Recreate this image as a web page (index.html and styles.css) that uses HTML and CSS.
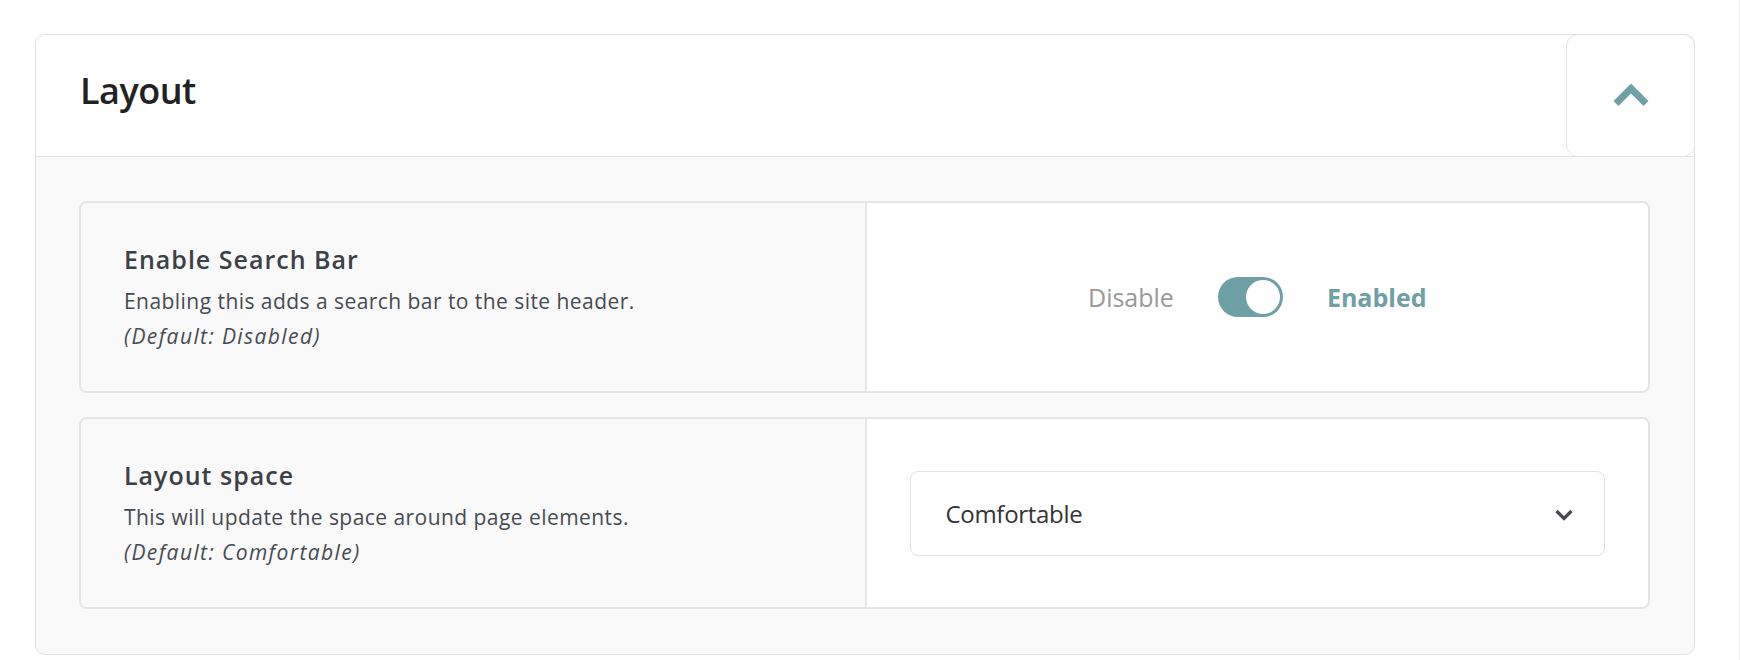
FILE: index.html
```html
<!DOCTYPE html>
<html lang="en">
<head>
<meta charset="utf-8">
<title>Layout settings</title>
<link rel="stylesheet" href="styles.css">
</head>
<body>
<div class="page">
  <section class="panel">
    <header class="panel-header">
      <h1 class="panel-title">Layout</h1>
      <button class="collapse-btn" type="button" aria-label="Collapse">
        <svg class="chev-up" width="36" height="24" viewBox="0 0 36 24" aria-hidden="true">
          <polyline points="3,20.5 18,5.5 33,20.5" fill="none" stroke="#6fa0a6" stroke-width="7" stroke-linejoin="miter" stroke-linecap="butt"/>
        </svg>
      </button>
    </header>
    <div class="panel-body">
      <div class="setting">
        <div class="setting-info">
          <h2 class="setting-title">Enable Search Bar</h2>
          <p class="setting-desc">Enabling this adds a search bar to the site header.</p>
          <p class="setting-default">(Default: Disabled)</p>
        </div>
        <div class="setting-control">
          <div class="toggle-group">
            <span class="toggle-off">Disable</span>
            <span class="toggle"><span class="knob"></span></span>
            <span class="toggle-on">Enabled</span>
          </div>
        </div>
      </div>
      <div class="setting">
        <div class="setting-info">
          <h2 class="setting-title">Layout space</h2>
          <p class="setting-desc">This will update the space around page elements.</p>
          <p class="setting-default">(Default: Comfortable)</p>
        </div>
        <div class="setting-control select-wrap">
          <div class="select">
            <span class="select-value">Comfortable</span>
            <svg class="chev-down" width="20" height="12" viewBox="0 0 20 12" aria-hidden="true">
              <polyline points="2.5,2 10,9.5 17.5,2" fill="none" stroke="#474a4e" stroke-width="3.2"/>
            </svg>
          </div>
        </div>
      </div>
    </div>
  </section>
</div>
</body>
</html>
```

FILE: styles.css
```css
* { box-sizing: border-box; }

html, body {
  margin: 0;
  padding: 0;
  background: #ffffff;
}

body {
  font-family: "Open Sans", "Noto Sans", "Liberation Sans", sans-serif;
  color: #222;
}

.page {
  width: 1740px;
  height: 660px;
  padding: 34px 44px 0 35px;
  border-right: 1px solid #ececec;
  overflow: hidden;
}

.panel {
  width: 1660px;
  border: 1px solid #e2e2e2;
  border-radius: 10px;
  background: #f9f9f9;
  overflow: hidden;
}

.panel-header {
  display: flex;
  align-items: stretch;
  height: 122px;
  background: #ffffff;
  border-bottom: 1px solid #e2e2e2;
}

.panel-title {
  flex: 1;
  margin: 0;
  padding: 34px 0 0 44px;
  font-size: 36px;
  line-height: 43px;
  font-weight: 600;
  color: #222222;
  letter-spacing: -0.5px;
}

.collapse-btn {
  width: 129px;
  margin: -1px -1px -1px 0;
  border: 1px solid #e4e4e4;
  border-radius: 12px;
  background: #ffffff;
  display: flex;
  align-items: center;
  justify-content: center;
  padding: 0;
  cursor: pointer;
}

.chev-up { display: block; margin-top: -2px; }

.panel-body {
  display: flex;
  flex-direction: column;
  gap: 24px;
  padding: 44px 44px 45px 43px;
}

.setting {
  display: grid;
  grid-template-columns: 1fr 1fr;
  border: 2px solid #e4e4e4;
  border-radius: 8px;
  overflow: hidden;
}

.setting-info {
  padding: 41px 43px 37px;
  background: #f9f9f9;
}

.setting-title {
  margin: 0 0 10px;
  font-size: 25px;
  line-height: 30px;
  font-weight: 600;
  color: #3c4147;
  letter-spacing: 1px;
}

.setting-desc,
.setting-default {
  margin: 0;
  font-size: 21px;
  line-height: 35px;
  color: #464b51;
}

.setting-desc { letter-spacing: 0.45px; }

.setting-default {
  font-style: italic;
  letter-spacing: 1.4px;
}

.setting-control {
  background: #ffffff;
  border-left: 2px solid #e6e6e6;
  display: flex;
  align-items: center;
  justify-content: center;
}

.toggle-group {
  display: flex;
  align-items: center;
  gap: 44px;
}

.toggle-off {
  font-size: 25px;
  color: #999999;
}

.toggle-on {
  font-size: 25px;
  font-weight: 700;
  color: #6fa0a6;
}

.toggle {
  width: 65px;
  height: 40px;
  border-radius: 20px;
  background: #6fa0a6;
  display: flex;
  align-items: center;
  justify-content: flex-end;
  padding: 0 3px;
}

.knob {
  width: 34px;
  height: 34px;
  border-radius: 50%;
  background: #ffffff;
}

.select-wrap {
  padding: 0 43px;
  justify-content: stretch;
}

.select {
  flex: 1;
  height: 85px;
  border: 1px solid #e2e2e2;
  border-radius: 8px;
  background: #ffffff;
  display: flex;
  align-items: center;
  justify-content: space-between;
  padding: 0 30px 0 35px;
}

.select-value {
  font-size: 24px;
  color: #333333;
  letter-spacing: -0.3px;
}

.chev-down { display: block; margin-top: 4px; }
```
